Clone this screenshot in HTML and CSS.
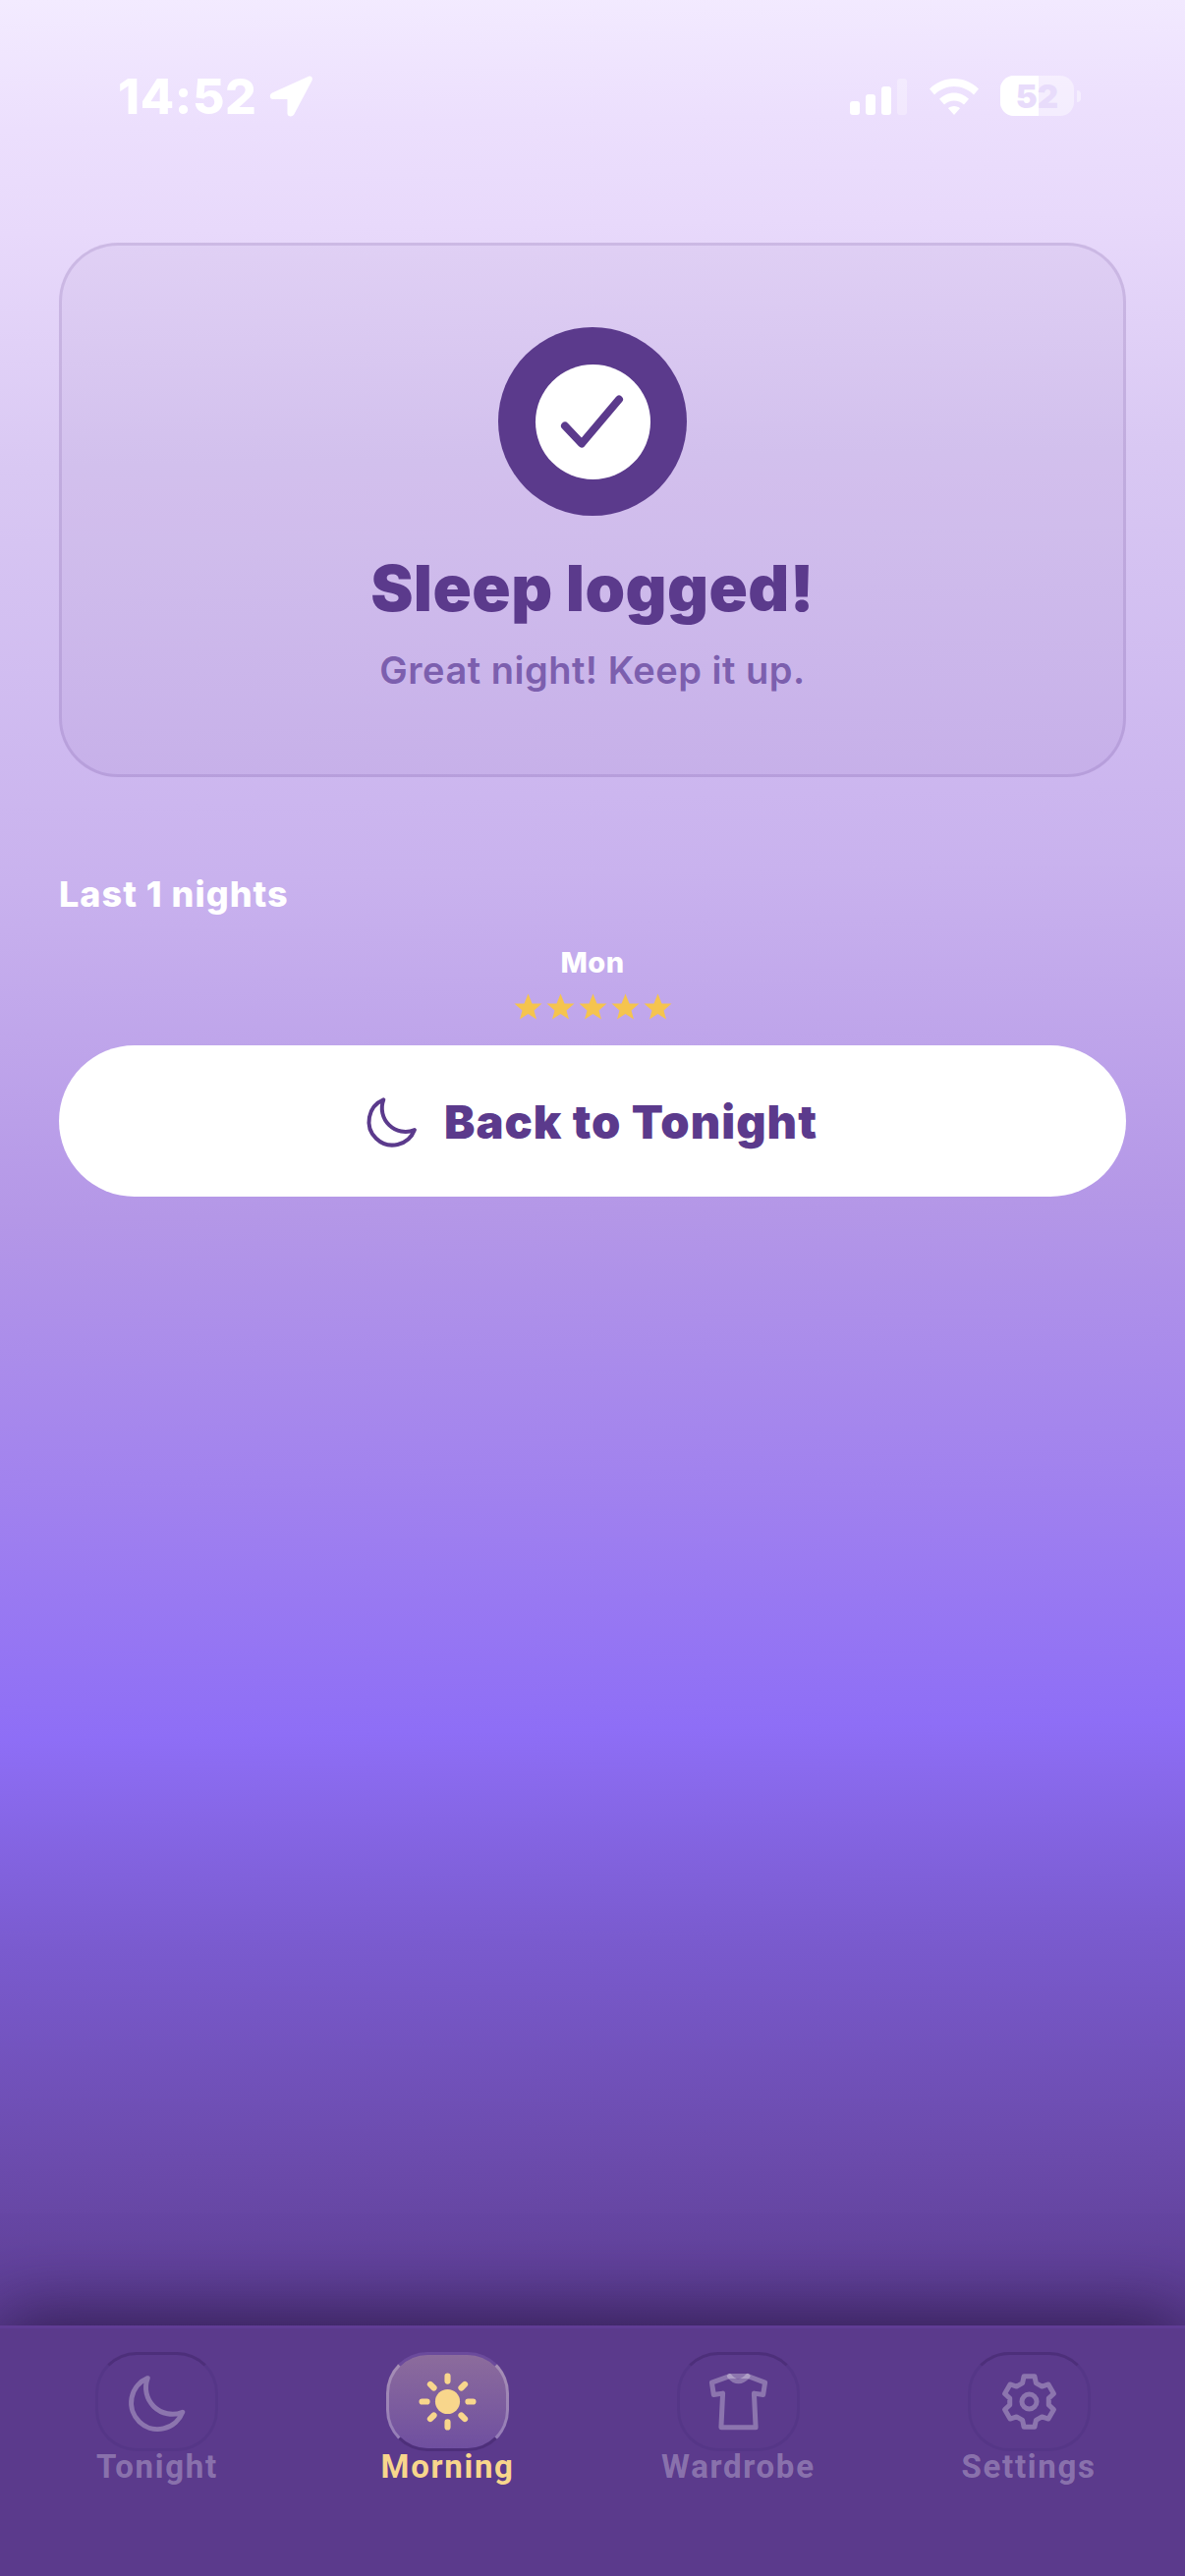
FILE: index.html
```html
<!DOCTYPE html>
<html lang="en">
<head>
    <meta charset="UTF-8">
    <meta name="viewport" content="width=device-width, initial-scale=1.0">
    <title>Sleep logged</title>
    <link rel="stylesheet" href="styles.css">
</head>
<body>
    <div class="app">
        <div class="status-bar">
            <div class="status-left">
                <span class="time">14:52</span>
                <svg class="arrow" viewBox="0 0 44 42"><path d="M39.500 1 3 17.500C-.5 19.500.5 24 4 24H18.500V38.500C18.500 42 24 42.500 25.500 39L43.500 5C44.800 1.500 42.500-.3 39.500 1Z"/></svg>
            </div>
            <div class="status-right">
                <div class="signal">
                    <span class="bar bar1"></span>
                    <span class="bar bar2"></span>
                    <span class="bar bar3"></span>
                    <span class="bar bar4"></span>
                </div>
                <svg class="wifi" viewBox="0 0 50 37"><path d="M25 0C34.500 0 43 3.800 50 10.500L45 16.500C39.500 11 32.500 8 25 8S10.500 11 5 16.500L0 10.500C7 3.800 15.500 0 25 0Z"/><path d="M25 14.500C31 14.500 36 17 40 20.800L35 26.500C32 24 28.800 22.500 25 22.500S18 24 15 26.500L10 20.800C14 17 19 14.500 25 14.500Z"/><path d="M25 28C27.500 28 29.800 29 31 30.200L25 37 19 30.200C20.200 29 22.500 28 25 28Z"/></svg>
                <div class="battery">
                    <span class="battery-fill"></span>
                    <span class="battery-num">52</span>
                </div>
                <span class="battery-nub"></span>
            </div>
        </div>

        <main class="content">
            <section class="card">
                <div class="check-ring">
                    <div class="check-inner">
                        <svg class="check" viewBox="0 0 66 58"><path d="M5 33.500 22 51.500 60 6.500"/></svg>
                    </div>
                </div>
                <h1>Sleep logged!</h1>
                <p class="card-sub">Great night! Keep it up.</p>
            </section>

            <h2 class="history-title">Last 1 nights</h2>
            <div class="history">
                <div class="night">
                    <span class="night-day">Mon</span>
                    <div class="stars">
                        <svg viewBox="0 0 33 33"><path d="M16.500 3.500 20.500 13.500H30.500L22.500 20.500 25 29.500 16.500 24 8 29.500 10.500 20.500 2.500 13.500H12.500Z"/></svg>
                        <svg viewBox="0 0 33 33"><path d="M16.500 3.500 20.500 13.500H30.500L22.500 20.500 25 29.500 16.500 24 8 29.500 10.500 20.500 2.500 13.500H12.500Z"/></svg>
                        <svg viewBox="0 0 33 33"><path d="M16.500 3.500 20.500 13.500H30.500L22.500 20.500 25 29.500 16.500 24 8 29.500 10.500 20.500 2.500 13.500H12.500Z"/></svg>
                        <svg viewBox="0 0 33 33"><path d="M16.500 3.500 20.500 13.500H30.500L22.500 20.500 25 29.500 16.500 24 8 29.500 10.500 20.500 2.500 13.500H12.500Z"/></svg>
                        <svg viewBox="0 0 33 33"><path d="M16.500 3.500 20.500 13.500H30.500L22.500 20.500 25 29.500 16.500 24 8 29.500 10.500 20.500 2.500 13.500H12.500Z"/></svg>
                    </div>
                </div>
            </div>

            <button class="back-button">
                <svg class="back-moon" viewBox="0 0 24 24"><path d="M8.750 3.880A9 9 0 1 0 20.600 15.400 9 9 0 0 1 8.750 3.880Z"/></svg>
                <span>Back to Tonight</span>
            </button>
        </main>

        <nav class="tab-bar">
            <div class="tab">
                <div class="tab-icon">
                    <svg class="tab-moon" viewBox="0 0 24 24"><path d="M8.750 3.880A9 9 0 1 0 20.600 15.400 9 9 0 0 1 8.750 3.880Z"/></svg>
                </div>
                <span class="tab-label">Tonight</span>
            </div>
            <div class="tab active">
                <div class="tab-icon">
                    <svg viewBox="0 0 24 24"><circle class="sun-core" cx="12" cy="12" r="4.500"/><path d="M12 2.700V4.500M12 19.500V21.300M2.700 12H4.500M19.500 12H21.300M5.700 5.700 7 7M17 17 18.300 18.300M5.700 18.300 7 17M17 7 18.300 5.700"/></svg>
                </div>
                <span class="tab-label">Morning</span>
            </div>
            <div class="tab">
                <div class="tab-icon">
                    <svg viewBox="0 0 24 24"><path d="M8.760 2.700 2.300 5.070 3 9.500 6.300 9 5.700 21.400H18.300L17.700 9 21 9.500 21.700 5.070 15.400 2.700Z"/><path d="M8.760 2.700Q12 6.500 15.400 2.700"/></svg>
                </div>
                <span class="tab-label">Wardrobe</span>
            </div>
            <div class="tab">
                <div class="tab-icon">
                    <svg viewBox="0 0 24 24"><path d="M9.540 5.230 10.050 2.810H13.950L14.460 5.230 16.630 6.480 18.980 5.710 20.940 9.100 19.090 10.750V13.250L20.940 14.900 18.980 18.290 16.630 17.520 14.460 18.770 13.950 21.190H10.050L9.540 18.770 7.370 17.520 5.020 18.290 3.060 14.900 4.910 13.250V10.750L3.060 9.100 5.020 5.710 7.370 6.480Z"/><circle cx="12" cy="12" r="2.700"/></svg>
                </div>
                <span class="tab-label">Settings</span>
            </div>
        </nav>
    </div>
</body>
</html>
```

FILE: styles.css
```css
* {
    box-sizing: border-box;
}
html, body {
    margin: 0;
    padding: 0;
}
body {
    font-family: Inter, "Noto Sans", sans-serif;
    width: 1206px;
    height: 2622px;
    overflow: hidden;
}
.app {
    width: 1206px;
    height: 2622px;
    display: flex;
    flex-direction: column;
    background: linear-gradient(179deg, #f3ebff 0%, #ecdffd 5%, #e8d9fb 9%, #d9c8f3 18%, #c9b2ee 34%, #b497e7 47%, #a283ee 57%, #8e6ef6 67%, #7a5bcf 75%, #6a4aaa 84%, #5c3d92 90%, #5a3a8e 100%);
}

/* status bar */
.status-bar {
    height: 247px;
    flex-shrink: 0;
    display: flex;
    justify-content: space-between;
    align-items: flex-start;
    padding: 77px 106px 0 120px;
}
.status-left {
    display: flex;
    align-items: center;
    gap: 12px;
}
.time {
    font-size: 50px;
    line-height: 42px;
    font-weight: 800;
    letter-spacing: 0.6px;
    color: #fff;
}
.arrow {
    width: 44px;
    height: 42px;
    fill: #fff;
}
.status-right {
    display: flex;
    align-items: center;
}
.signal {
    display: flex;
    align-items: flex-end;
    gap: 6px;
    height: 37px;
    margin-top: 2px;
}
.bar {
    width: 10px;
    background: #fff;
    border-radius: 3px;
}
.bar1 { height: 14px; }
.bar2 { height: 21px; }
.bar3 { height: 29px; }
.bar4 { height: 37px; opacity: 0.3; }
.wifi {
    width: 50px;
    height: 37px;
    fill: #fff;
    margin: 2px 22px 0 23px;
}
.battery {
    position: relative;
    width: 75px;
    height: 41px;
    border-radius: 14px;
    overflow: hidden;
    background: rgba(255,255,255,0.45);
    display: flex;
    align-items: center;
    justify-content: center;
}
.battery-fill {
    position: absolute;
    left: 0;
    top: 0;
    bottom: 0;
    width: 39px;
    background: #fff;
}
.battery-num {
    position: relative;
    font-size: 33px;
    font-weight: 900;
    color: #e8dcfb;
}
.battery-nub {
    width: 4px;
    height: 12px;
    margin-left: 3px;
    border-radius: 0 4px 4px 0;
    background: rgba(255,255,255,0.45);
}

/* main column */
.content {
    flex: 1;
    padding: 0 60px;
    display: flex;
    flex-direction: column;
}
.card {
    height: 544px;
    border-radius: 60px;
    border: 3px solid rgba(91,58,140,0.15);
    background: rgba(91,58,140,0.05);
    display: flex;
    flex-direction: column;
    align-items: center;
    padding-top: 83px;
}
.check-ring {
    width: 192px;
    height: 192px;
    border-radius: 50%;
    background: #5b3a8c;
    display: flex;
    align-items: center;
    justify-content: center;
}
.check-inner {
    width: 117px;
    height: 117px;
    border-radius: 50%;
    background: #fff;
    display: flex;
    align-items: center;
    justify-content: center;
}
.check {
    width: 66px;
    height: 58px;
    fill: none;
    stroke: #5b3a8c;
    stroke-width: 8px;
    stroke-linecap: round;
    stroke-linejoin: round;
}
h1 {
    margin: 34px 0 0;
    font-size: 65px;
    line-height: 80px;
    font-weight: 900;
    letter-spacing: 0.4px;
    color: #5b3a8c;
}
.card-sub {
    margin: 20px 0 0;
    font-size: 38px;
    line-height: 46px;
    font-weight: 600;
    letter-spacing: 0.5px;
    color: #7c5fae;
}
.history-title {
    margin: 97px 0 0;
    font-size: 36px;
    line-height: 44px;
    font-weight: 800;
    letter-spacing: 1px;
    color: #fff;
}
.history {
    display: flex;
    justify-content: center;
    margin-top: 30px;
}
.night {
    display: flex;
    flex-direction: column;
    align-items: center;
    gap: 10px;
}
.night-day {
    font-size: 29px;
    line-height: 36px;
    font-weight: 800;
    letter-spacing: 0.5px;
    color: #fff;
}
.stars {
    display: flex;
}
.stars svg {
    width: 33px;
    height: 33px;
    fill: #f5c44e;
}
.back-button {
    margin-top: 23px;
    height: 154px;
    border: none;
    border-radius: 77px;
    background: #fff;
    display: flex;
    align-items: center;
    justify-content: center;
    gap: 21px;
    padding: 0 7px 0 0;
    font-family: inherit;
    font-size: 47px;
    font-weight: 900;
    letter-spacing: 1px;
    color: #5b3a8c;
}
.back-moon {
    width: 64px;
    height: 64px;
    fill: none;
    stroke: #5b3a8c;
    stroke-width: 1.500px;
    stroke-linejoin: round;
}

/* bottom tabs */
.tab-bar {
    height: 255px;
    flex-shrink: 0;
    background: #5b3a8c;
    border-top: 3px solid #603d95;
    box-shadow: 0 -10px 70px rgba(35,18,60,0.75);
    display: flex;
    padding: 24px 11px 0 12px;
}
.tab {
    flex: 1;
    display: flex;
    flex-direction: column;
    align-items: center;
    color: rgba(255,255,255,0.3);
}
.tab-icon {
    width: 125px;
    height: 101px;
    flex-shrink: 0;
    border-radius: 42px;
    border: 3px solid rgba(70,44,120,0.25);
    border-top-color: #4d2f7a;
    display: flex;
    align-items: center;
    justify-content: center;
}
.tab-icon svg {
    width: 67px;
    height: 67px;
    fill: none;
    stroke: currentColor;
    stroke-width: 1.800px;
    stroke-linecap: round;
    stroke-linejoin: round;
}
.tab-icon .tab-moon {
    width: 72px;
    height: 72px;
    stroke-width: 1.650px;
}
.tab-label {
    margin-top: -2px;
    font-family: Roboto, sans-serif;
    font-size: 33px;
    line-height: 36px;
    font-weight: 700;
    letter-spacing: 1.700px;
    white-space: nowrap;
}
.tab.active {
    color: #f8d68c;
}
.tab.active .tab-icon {
    background: linear-gradient(180deg, #8c6c9c 0%, #6f4fa0 100%);
    border-color: rgba(255,255,255,0.25);
    border-top-color: #6b4a9c;
    border-bottom-color: #4d2f7a;
}
.tab.active svg {
    stroke-width: 2.200px;
}
.tab.active .sun-core {
    fill: currentColor;
    stroke: none;
}
```
